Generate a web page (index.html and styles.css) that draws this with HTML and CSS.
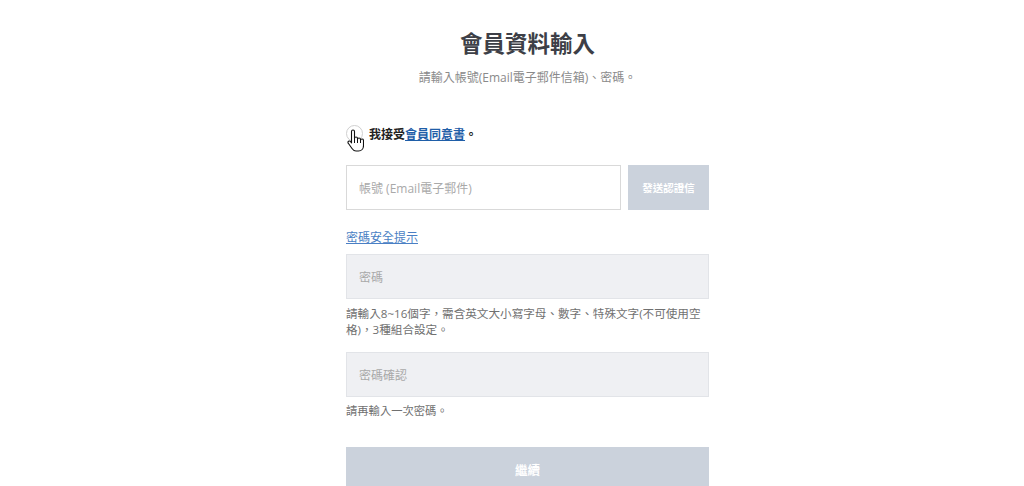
FILE: index.html
```html
<!DOCTYPE html>
<html lang="zh-Hant">
<head>
<meta charset="utf-8">
<title>會員資料輸入</title>
<link rel="stylesheet" href="styles.css">
</head>
<body>
<main class="form">
  <h1 class="title">會員資料輸入</h1>
  <p class="subtitle">請輸入帳號(Email電子郵件信箱)、密碼。</p>

  <label class="agree">
    <span class="check"></span>
    <span class="agree-text">我接受<a class="terms" href="#">會員同意書</a>。</span>
    <svg class="cursor" viewBox="0 0 17 23" width="17" height="23" aria-hidden="true">
      <path d="M4.5 2.5a1.5 1.5 0 0 1 3 0V9.5a1.5 1.5 0 0 1 3 0V10.5a1.5 1.5 0 0 1 3 0V11.5a1.5 1.5 0 0 1 3 0V16.5c0 3-2 5.5-5 5.5H9c-2 0-3-1-4-2.5L1.3 14.3a1.4 1.4 0 0 1 2.2-1.8L4.5 13.8Z" fill="#fff" stroke="#111" stroke-width="1.1" stroke-linejoin="round"/>
      <path d="M7.5 9.5V14M10.5 10.5V14M13.5 11.5V14" fill="none" stroke="#111" stroke-width="1"/>
    </svg>
  </label>

  <div class="email-row">
    <div class="field field-white"><span class="ph">帳號 (Email電子郵件)</span></div>
    <button class="btn-send" type="button">發送認證信</button>
  </div>

  <a class="hint-link" href="#">密碼安全提示</a>

  <div class="field field-gray field-pw"><span class="ph">密碼</span></div>
  <p class="hint hint-pw">請輸入8~16個字，需含英文大小寫字母、數字、特殊文字(不可使用空格)，3種組合設定。</p>

  <div class="field field-gray field-confirm"><span class="ph">密碼確認</span></div>
  <p class="hint hint-confirm">請再輸入一次密碼。</p>

  <button class="btn-next" type="button">繼續</button>
</main>
</body>
</html>
```

FILE: styles.css
```css
* { box-sizing: border-box; }
html, body {
  margin: 0;
  padding: 0;
  background: #ffffff;
  overflow: hidden;
}
body {
  font-family: "Open Sans", "Noto Sans CJK TC", sans-serif;
  height: 486px;
}
.form {
  width: 363px;
  margin-left: 346px;
  display: flex;
  flex-direction: column;
}
.title {
  margin: 27px 0 0;
  font-size: 22.5px;
  line-height: 30px;
  font-weight: 700;
  color: #3d3f47;
  text-align: center;
  font-family: "Noto Sans CJK TC", sans-serif;
}
.subtitle {
  margin: 12px 0 0;
  font-size: 12px;
  line-height: 18px;
  color: #8a8a8a;
  text-align: center;
}
.agree {
  position: relative;
  margin-top: 36px;
  height: 20px;
  display: flex;
  align-items: center;
  gap: 6px;
}
.check {
  width: 17px;
  height: 17px;
  border: 1px solid #cfcfcf;
  border-radius: 50%;
  background: #fff;
  flex: none;
}
.agree-text {
  font-size: 12px;
  font-weight: 700;
  color: #222;
  font-family: "Noto Sans CJK TC", sans-serif;
}
.terms {
  color: #1f5ea8;
  text-decoration: underline;
}
.cursor {
  position: absolute;
  left: 1px;
  top: 6px;
}
.email-row {
  margin-top: 22px;
  display: flex;
  gap: 7px;
  height: 45px;
}
.field {
  height: 45px;
  display: flex;
  align-items: center;
  padding-left: 12px;
  font-size: 12px;
}
.field-white {
  flex: 1;
  background: #fff;
  border: 1px solid #d9d9d9;
}
.field-gray {
  background: #eff0f3;
  border: 1px solid #e2e4e8;
}
.ph {
  color: #a9a9a9;
}
.btn-send {
  width: 81px;
  height: 45px;
  border: 0;
  padding: 0;
  background: #cbd2dc;
  color: #ffffff;
  font-size: 10.5px;
  font-weight: 700;
  font-family: "Noto Sans CJK TC", sans-serif;
}
.hint-link {
  margin-top: 19px;
  align-self: flex-start;
  font-size: 12px;
  line-height: 18px;
  color: #4a7fc4;
  text-decoration: underline;
}
.field-pw { margin-top: 7px; }
.hint {
  margin: 0;
  font-size: 11.3px;
  line-height: 16px;
  color: #707070;
}
.hint-pw { margin-top: 7px; font-size: 11.6px; }
.field-confirm { margin-top: 14px; }
.hint-confirm { margin-top: 6px; }
.btn-next {
  margin-top: 28px;
  height: 45px;
  border: 0;
  background: #cbd2dc;
  color: #ffffff;
  font-size: 12.5px;
  font-weight: 700;
  font-family: "Noto Sans CJK TC", sans-serif;
}
```
